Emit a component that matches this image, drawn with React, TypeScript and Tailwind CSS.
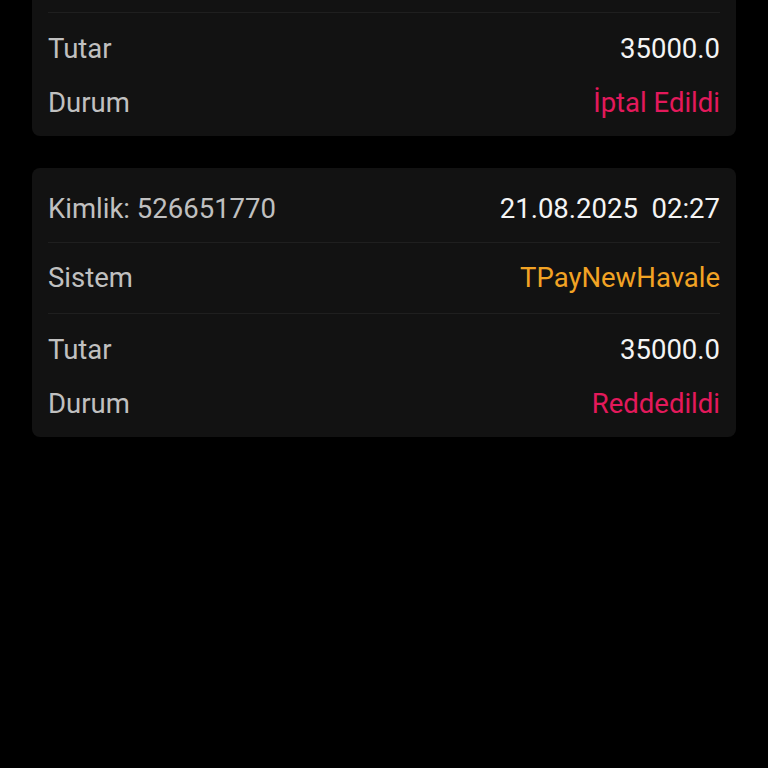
import React from "react"

type Tx = {
    id: string
    date: string
    system: string
    amount: string
    status: string
}

const items: Tx[] = [
    { id: "526651771", date: "21.08.2025  02:31", system: "TPayNewHavale", amount: "35000.0", status: "İptal Edildi" },
    { id: "526651770", date: "21.08.2025  02:27", system: "TPayNewHavale", amount: "35000.0", status: "Reddedildi" },
]

function Card({ tx }: { tx: Tx }) {
    return (
        <div className="rounded-lg bg-[#121212] px-4">
            <div className="flex h-[74px] items-center justify-between pt-2">
                <span className="text-[#c0c0c0]">Kimlik: {tx.id}</span>
                <span className="whitespace-pre text-[#f4f4f4]">{tx.date}</span>
            </div>
            <div className="h-px bg-[#1f1f1f]" />
            <div className="flex h-[70px] items-center justify-between">
                <span className="text-[#c0c0c0]">Sistem</span>
                <span className="text-[#f2a324]">{tx.system}</span>
            </div>
            <div className="h-px bg-[#1f1f1f]" />
            <div className="pt-[9px] pb-[6px]">
                <div className="flex h-[54px] items-center justify-between">
                    <span className="text-[#c0c0c0]">Tutar</span>
                    <span className="text-[#f4f4f4]">{tx.amount}</span>
                </div>
                <div className="flex h-[54px] items-center justify-between">
                    <span className="text-[#c0c0c0]">Durum</span>
                    <span className="text-[#e3195b]">{tx.status}</span>
                </div>
            </div>
        </div>
    )
}

export default function App() {
    return (
        <div className="h-[768px] w-[768px] overflow-hidden bg-black font-['Roboto',sans-serif] text-[27.5px] leading-none">
            <div className="-mt-[133px] flex flex-col gap-8 px-8">
                {items.map((tx) => (
                    <Card key={tx.id} tx={tx} />
                ))}
            </div>
        </div>
    )
}
